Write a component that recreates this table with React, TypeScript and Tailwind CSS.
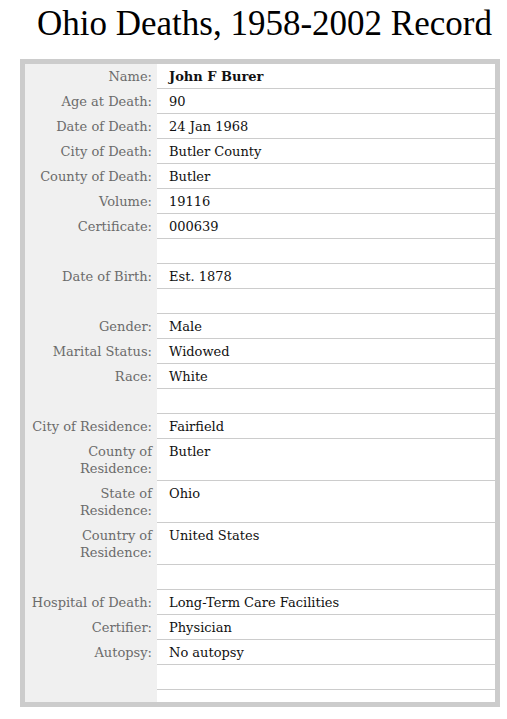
const rows: { label: React.ReactNode; value?: string; bold?: boolean }[] = [
  { label: 'Name:', value: 'John F Burer', bold: true },
  { label: 'Age at Death:', value: '90' },
  { label: 'Date of Death:', value: '24 Jan 1968' },
  { label: 'City of Death:', value: 'Butler County' },
  { label: 'County of Death:', value: 'Butler' },
  { label: 'Volume:', value: '19116' },
  { label: 'Certificate:', value: '000639' },
  { label: '' },
  { label: 'Date of Birth:', value: 'Est. 1878' },
  { label: '' },
  { label: 'Gender:', value: 'Male' },
  { label: 'Marital Status:', value: 'Widowed' },
  { label: 'Race:', value: 'White' },
  { label: '' },
  { label: 'City of Residence:', value: 'Fairfield' },
  { label: <>County of<br />Residence:</>, value: 'Butler' },
  { label: <>State of<br />Residence:</>, value: 'Ohio' },
  { label: <>Country of<br />Residence:</>, value: 'United States' },
  { label: '' },
  { label: 'Hospital of Death:', value: 'Long-Term Care Facilities' },
  { label: 'Certifier:', value: 'Physician' },
  { label: 'Autopsy:', value: 'No autopsy' },
  { label: '' },
]

export default function App() {
  return (
    <div className="min-h-screen bg-white">
      <h1 className="pt-[4px] pl-[37px] text-[35px] leading-[40px] font-normal text-black [font-family:'Liberation_Serif',serif]">
        Ohio Deaths, 1958-2002 Record
      </h1>
      <div className="mt-[15px] ml-[20px] w-[480px] border-[5px] border-[#cccccc] bg-white">
        <div className="flex flex-col text-[13px] leading-[17px] [font-family:'DejaVu_Serif',serif]">
          {rows.map((r, i) => (
            <div key={i} className="flex">
              <div className="w-[132px] shrink-0 bg-[#f0f0f0] pr-[5px] pt-[4px] pb-[4px] text-right text-[#6b6b6b] whitespace-nowrap">
                {r.label || '\u00a0'}
              </div>
              <div className={`flex-1 border-b border-[#cccccc] pl-[12px] pt-[4px] pb-[3px] text-[#111] ${r.bold ? 'font-bold' : ''}`}>
                {r.value || '\u00a0'}
              </div>
            </div>
          ))}
          <div className="flex h-[12px]">
            <div className="w-[132px] shrink-0 bg-[#f0f0f0]" />
            <div className="flex-1" />
          </div>
        </div>
      </div>
    </div>
  )
}
